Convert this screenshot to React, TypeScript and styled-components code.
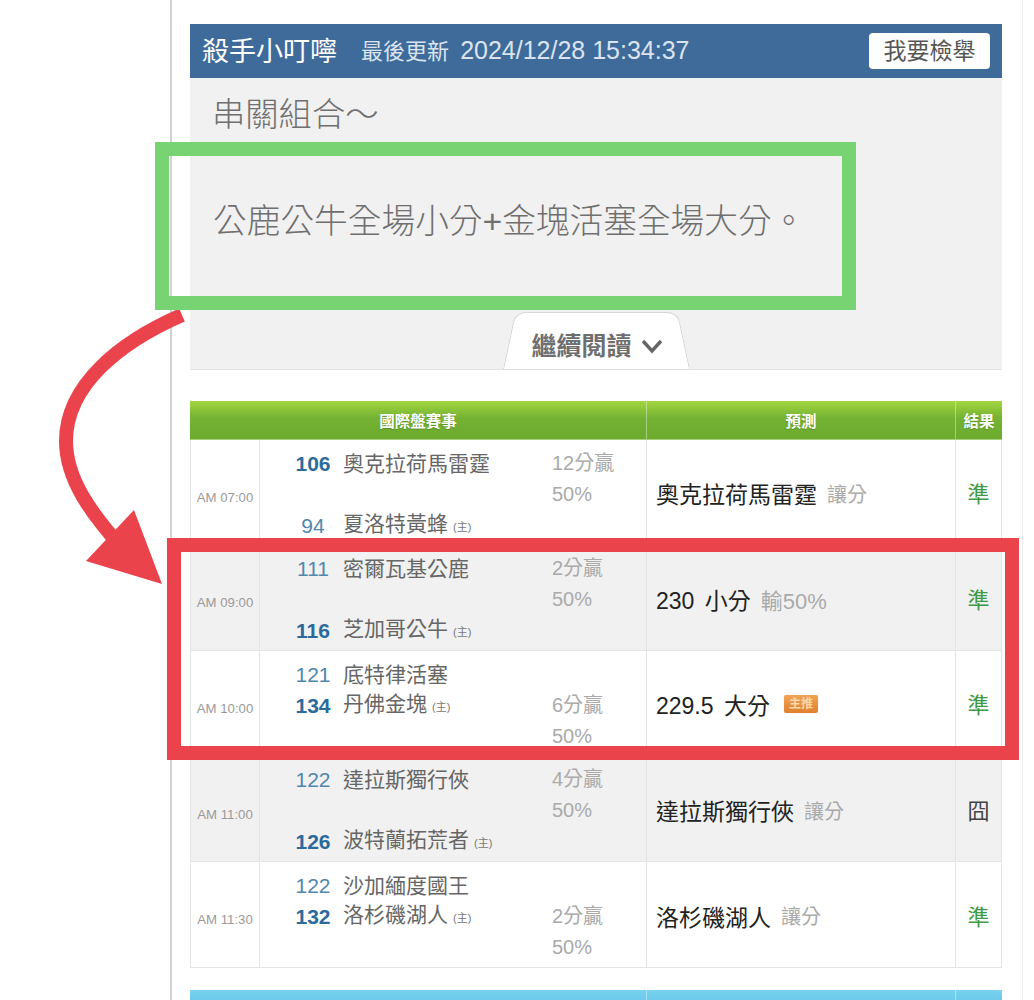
import React from 'react';
import styled, { createGlobalStyle } from 'styled-components';

const GlobalStyle = createGlobalStyle`
  html, body {
    margin: 0;
    padding: 0;
    background: #fff;
    font-family: "Liberation Sans", "Noto Sans CJK TC", sans-serif;
  }
`;

const Screen = styled.div`
  position: relative;
  width: 1034px;
  height: 1000px;
  overflow: hidden;
  background: #fff;
`;

const Column = styled.div`
  box-sizing: border-box;
  width: 853px;
  height: 1000px;
  margin-left: 170px;
  padding: 24px 20px 0 18px;
  border-left: 2px solid #d2d2d2;
  border-right: 1px solid #ececec;
`;

const Post = styled.section`
  background: #f1f1f1;
  border-bottom: 1px solid #e2e2e2;
`;

const PostHead = styled.header`
  display: flex;
  align-items: center;
  height: 54px;
  padding: 0 12px;
  background: #3f6b9b;
  color: #fff;
`;

const Author = styled.span`
  margin-top: 3px;
  font-size: 27px;
  line-height: 1;
`;

const Updated = styled.span`
  margin: 0 0 2px 24px;
  font-size: 22px;
  line-height: 1;
  color: #dbe4ee;
`;

const UpdatedTime = styled.span`
  margin-left: 5px;
  font-size: 25px;
`;

const ReportButton = styled.button`
  margin-left: auto;
  width: 121px;
  height: 36px;
  padding: 0;
  border: 0;
  border-radius: 4px;
  background: #fff;
  color: #555;
  font-family: inherit;
  font-size: 23px;
  line-height: 36px;
`;

const PostBody = styled.div`
  display: flex;
  flex-direction: column;
  padding: 14px 22px 0 23px;
  color: #6f6f6f;
  font-size: 33.7px;
  font-weight: 300;
  line-height: 46px;
`;

const Title = styled.h2`
  margin: 0 0 0 -1px;
  font-size: 33.3px;
  font-weight: 300;
  line-height: 46px;
  white-space: nowrap;
`;

const Paragraph = styled.p`
  margin: 60px 0 0;
  white-space: nowrap;
`;

const MoreTab = styled.div`
  position: relative;
  display: flex;
  align-items: center;
  justify-content: center;
  gap: 9px;
  align-self: center;
  box-sizing: border-box;
  width: 187px;
  height: 57px;
  margin: 68px 0 0;
  padding: 11px 0 0 1px;
  overflow: hidden;
  color: #6e6e6e;
  font-size: 25px;
  font-weight: 700;
  line-height: 1;

  &::before,
  &::after {
    content: '';
    position: absolute;
    top: 0;
    bottom: 0;
    box-sizing: border-box;
    width: 60%;
    border-top: 1px solid #d6d6d6;
    background: #fff;
  }

  &::before {
    left: 0;
    border-left: 1px solid #d0d0d0;
    border-top-left-radius: 10px;
    transform-origin: bottom left;
    transform: skewX(-12deg);
  }

  &::after {
    right: 0;
    border-right: 1px solid #d0d0d0;
    border-top-right-radius: 10px;
    transform-origin: bottom right;
    transform: skewX(12deg);
  }

  & > * {
    position: relative;
    z-index: 1;
  }
`;

const Table = styled.div`
  margin-top: 31px;
`;

const HeadRow = styled.div<{ $tone: 'green' | 'sky' }>`
  display: grid;
  grid-template-columns: 456px 309px 47px;
  height: 38px;
  background: ${({ $tone }) =>
    $tone === 'green'
      ? 'linear-gradient(#a3d63f 0, #74b233 45%, #6cab2f 100%)'
      : 'linear-gradient(#78d2ef 0, #4fb7e2 100%)'};
  border-bottom: 1px solid ${({ $tone }) => ($tone === 'green' ? '#a5d07a' : '#9adcf2')};
`;

const HeadCell = styled.div`
  display: flex;
  align-items: center;
  justify-content: center;
  color: #fff;
  font-size: 15.5px;
  font-weight: 700;
  text-shadow: 0 1px 1px rgba(60, 100, 20, 0.4);

  & + & {
    border-left: 1px solid rgba(255, 255, 255, 0.4);
  }
`;

const Row = styled.div<{ $shaded: boolean }>`
  display: grid;
  grid-template-columns: 68px 387px 309px 46px;
  height: 105.6px;
  box-sizing: border-box;
  background: ${({ $shaded }) => ($shaded ? '#f1f1f1' : '#fff')};
  border: 1px solid #e4e4e4;
  border-top: 0;
`;

const TimeCell = styled.div`
  display: flex;
  align-items: center;
  justify-content: center;
  padding-top: 10px;
  color: #9a9a9a;
  font-size: 13.2px;
  white-space: nowrap;
`;

const MatchCell = styled.div`
  display: grid;
  grid-template-columns: 54px 206px auto;
  grid-template-rows: repeat(3, 31px);
  column-gap: 3px;
  align-items: center;
  padding: 7.5px 0 0 26px;
  border-left: 1px solid #e4e4e4;
  font-size: 21px;
  line-height: 31px;
`;

const TeamNo = styled.span<{ $line: number; $favored: boolean }>`
  grid-column: 1;
  grid-row: ${({ $line }) => $line};
  text-align: center;
  color: ${({ $favored }) => ($favored ? '#2c6a9c' : '#4f87ad')};
  font-weight: ${({ $favored }) => ($favored ? 700 : 400)};
`;

const TeamName = styled.span<{ $line: number }>`
  grid-column: 2;
  grid-row: ${({ $line }) => $line};
  color: #666;
  white-space: nowrap;
`;

const HomeMark = styled.small`
  margin-left: 5px;
  color: #777;
  font-size: 11px;
`;

const Odds = styled.span<{ $line: number }>`
  grid-column: 3;
  grid-row: ${({ $line }) => $line};
  color: #aaa;
  font-size: 20px;
  white-space: nowrap;
`;

const PickCell = styled.div`
  display: flex;
  align-items: center;
  gap: 10px;
  padding: 2px 0 0 9px;
  border-left: 1px solid #e4e4e4;
  color: #222;
  font-size: 23px;
  word-spacing: 4px;
  white-space: nowrap;
`;

const PickNote = styled.span<{ $size: number }>`
  color: #aaa;
  font-size: ${({ $size }) => $size}px;
`;

const TopPick = styled.span`
  display: inline-block;
  width: 34px;
  height: 18px;
  margin-left: 4px;
  border-radius: 2px;
  background: linear-gradient(#f0a458, #df802f);
  box-shadow: 0 0 1px #f3c08a;
  color: #f8d7a6;
  font-size: 12px;
  font-weight: 700;
  line-height: 18px;
  text-align: center;
`;

const ResultCell = styled.div<{ $hit: boolean }>`
  display: flex;
  align-items: center;
  justify-content: center;
  border-left: 1px solid #e4e4e4;
  color: ${({ $hit }) => ($hit ? '#3f9a45' : '#444')};
  font-size: 22px;
`;

const NextHead = styled(HeadRow)`
  margin-top: 22px;
`;

const MarkBox = styled.div<{ $color: string; $left: number; $top: number; $w: number; $h: number }>`
  position: absolute;
  box-sizing: border-box;
  left: ${({ $left }) => $left}px;
  top: ${({ $top }) => $top}px;
  width: ${({ $w }) => $w}px;
  height: ${({ $h }) => $h}px;
  border: 14px solid ${({ $color }) => $color};
`;

const ArrowLayer = styled.svg`
  position: absolute;
  left: 0;
  top: 0;
`;

interface Game {
  time: string;
  away: [string, string, boolean];
  home: [string, string, boolean];
  homeLine: number;
  odds: [string, string];
  oddsLine: number;
  pick: string;
  note?: string;
  noteSize?: number;
  top?: boolean;
  hit: boolean;
}

const games: Game[] = [
  {
    time: 'AM 07:00',
    away: ['106', '奧克拉荷馬雷霆', true],
    home: ['94', '夏洛特黃蜂', false],
    homeLine: 3,
    odds: ['12分贏', '50%'],
    oddsLine: 1,
    pick: '奧克拉荷馬雷霆',
    note: '讓分',
    hit: true,
  },
  {
    time: 'AM 09:00',
    away: ['111', '密爾瓦基公鹿', false],
    home: ['116', '芝加哥公牛', true],
    homeLine: 3,
    odds: ['2分贏', '50%'],
    oddsLine: 1,
    pick: '230 小分',
    note: '輸50%',
    noteSize: 22,
    hit: true,
  },
  {
    time: 'AM 10:00',
    away: ['121', '底特律活塞', false],
    home: ['134', '丹佛金塊', true],
    homeLine: 2,
    odds: ['6分贏', '50%'],
    oddsLine: 2,
    pick: '229.5 大分',
    top: true,
    hit: true,
  },
  {
    time: 'AM 11:00',
    away: ['122', '達拉斯獨行俠', false],
    home: ['126', '波特蘭拓荒者', true],
    homeLine: 3,
    odds: ['4分贏', '50%'],
    oddsLine: 1,
    pick: '達拉斯獨行俠',
    note: '讓分',
    hit: false,
  },
  {
    time: 'AM 11:30',
    away: ['122', '沙加緬度國王', false],
    home: ['132', '洛杉磯湖人', true],
    homeLine: 2,
    odds: ['2分贏', '50%'],
    oddsLine: 2,
    pick: '洛杉磯湖人',
    note: '讓分',
    hit: true,
  },
];

const App: React.FC = () => {
  return (
    <Screen>
      <GlobalStyle />
      <Column>
        <Post>
          <PostHead>
            <Author>殺手小叮嚀</Author>
            <Updated>
              最後更新 <UpdatedTime>2024/12/28 15:34:37</UpdatedTime>
            </Updated>
            <ReportButton>我要檢舉</ReportButton>
          </PostHead>
          <PostBody>
            <Title>串關組合～</Title>
            <Paragraph>公鹿公牛全場小分+金塊活塞全場大分。</Paragraph>
            <MoreTab>
              <span>繼續閱讀</span>
              <svg width="22" height="15" viewBox="0 0 22 15">
                <polyline points="2,2 11,12 20,2" fill="none" stroke="#666" strokeWidth="3.4" />
              </svg>
            </MoreTab>
          </PostBody>
        </Post>

        <Table>
          <HeadRow $tone="green">
            <HeadCell>國際盤賽事</HeadCell>
            <HeadCell>預測</HeadCell>
            <HeadCell>結果</HeadCell>
          </HeadRow>
          {games.map((game, i) => (
            <Row key={game.time} $shaded={i % 2 === 1}>
              <TimeCell>{game.time}</TimeCell>
              <MatchCell>
                <TeamNo $line={1} $favored={game.away[2]}>{game.away[0]}</TeamNo>
                <TeamName $line={1}>{game.away[1]}</TeamName>
                <TeamNo $line={game.homeLine} $favored={game.home[2]}>{game.home[0]}</TeamNo>
                <TeamName $line={game.homeLine}>
                  {game.home[1]}
                  <HomeMark>(主)</HomeMark>
                </TeamName>
                <Odds $line={game.oddsLine}>{game.odds[0]}</Odds>
                <Odds $line={game.oddsLine + 1}>{game.odds[1]}</Odds>
              </MatchCell>
              <PickCell>
                {game.pick}
                {game.note && <PickNote $size={game.noteSize ?? 20}>{game.note}</PickNote>}
                {game.top && <TopPick>主推</TopPick>}
              </PickCell>
              <ResultCell $hit={game.hit}>{game.hit ? '準' : '囧'}</ResultCell>
            </Row>
          ))}
        </Table>

        <NextHead $tone="sky">
          <HeadCell />
          <HeadCell />
          <HeadCell />
        </NextHead>
      </Column>

      {/* annotations drawn on top of the screenshot */}
      <ArrowLayer width="1034" height="1000" viewBox="0 0 1034 1000">
        <path d="M182 315 C 120 342, 66 385, 66 441 C 66 480, 92 514, 122 548" fill="none" stroke="#ea434c" strokeWidth="14" />
        <polygon points="162,584 134,510 86,561" fill="#ea434c" />
      </ArrowLayer>
      <MarkBox $color="#78d473" $left={155} $top={142} $w={701} $h={168} />
      <MarkBox $color="#ea434c" $left={167} $top={538} $w={852} $h={222} />
    </Screen>
  );
};

export default App;
